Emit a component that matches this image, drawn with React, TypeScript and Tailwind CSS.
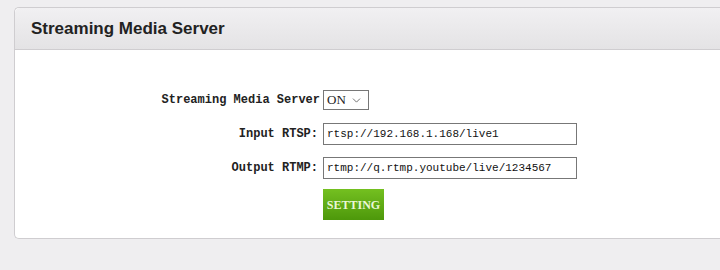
import { ChevronDown } from "lucide-react";

export default function App() {
  return (
    <div className="h-[270px] w-[720px] overflow-hidden bg-[#efeef0] pl-[14px] pt-[7px]">
      <div className="h-[232px] w-[720px] rounded-l-[5px] border border-r-0 border-[#cfcdd0] bg-white">
        <div className="flex h-[42px] items-center rounded-tl-[5px] border-b border-[#cfcdd0] bg-gradient-to-b from-[#f1f0f2] to-[#e4e3e5] pl-[16px] pt-[1px]">
          <h2 className="font-['Liberation_Sans',Arial,sans-serif] text-[17px] font-bold text-[#222]">
            Streaming Media Server
          </h2>
        </div>

        <div className="flex flex-col pt-[40px] font-['Liberation_Mono',monospace] text-[12px] text-[#222]">
          <div className="flex h-[20px] items-center">
            <label className="w-[308px] pr-[3px] text-right font-bold">Streaming Media Server</label>
            <div className="flex h-[20px] w-[46px] items-center justify-between border border-[#777] pl-[3px] pr-[5px] font-['Liberation_Serif',serif] text-[13px]">
              <span>ON</span>
              <ChevronDown className="size-[13px] text-[#555]" strokeWidth={1.5} />
            </div>
          </div>

          <div className="mt-[13px] flex h-[22px] items-center">
            <label className="w-[308px] pr-[5px] text-right font-bold">Input RTSP:</label>
            <input
              readOnly
              value="rtsp://192.168.1.168/live1"
              className="h-[22px] w-[254px] border border-[#777] px-[3px] font-['Liberation_Mono',monospace] text-[11px] text-[#111] outline-none"
            />
          </div>

          <div className="mt-[12px] flex h-[22px] items-center">
            <label className="w-[308px] pr-[5px] text-right font-bold">Output RTMP:</label>
            <input
              readOnly
              value="rtmp://q.rtmp.youtube/live/1234567"
              className="h-[22px] w-[254px] border border-[#777] px-[3px] font-['Liberation_Mono',monospace] text-[11px] text-[#111] outline-none"
            />
          </div>

          <div className="mt-[10px] flex pl-[308px]">
            <button className="h-[31px] w-[61px] bg-gradient-to-b from-[#74c020] to-[#4d980a] font-['Liberation_Serif',serif] text-[12px] font-bold text-[#eaf7d6]">
              SETTING
            </button>
          </div>
        </div>
      </div>
    </div>
  );
}
